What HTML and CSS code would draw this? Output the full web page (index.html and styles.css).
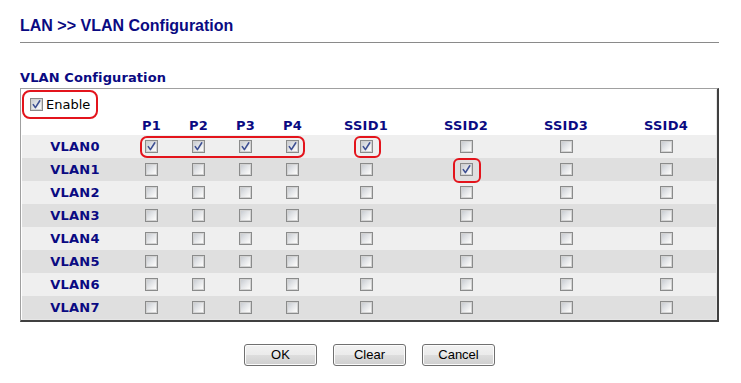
FILE: index.html
```html
<!DOCTYPE html>
<html>
<head>
<meta charset="utf-8">
<title>LAN &gt;&gt; VLAN Configuration</title>
<link rel="stylesheet" href="styles.css">
</head>
<body>
<div class="page">
  <h1 class="page-title">LAN &gt;&gt; VLAN Configuration</h1>
  <div class="section-title">VLAN Configuration</div>
  <div class="panel">
    <div class="panel-inner">
      <div class="enable-row">
        <span class="cb on"><svg viewBox="0 0 11 11"><path d="M2.3 5.6 L4.4 8.6 L8.8 1.8"/></svg></span>
        <span class="enable-label">Enable</span>
      </div>
      <div class="grid head">
        <span></span><span>P1</span><span>P2</span><span>P3</span><span>P4</span><span>SSID1</span><span>SSID2</span><span>SSID3</span><span>SSID4</span>
      </div>
      <div class="grid row light">
        <span class="lbl">VLAN0</span>
        <span class="cb on"><svg viewBox="0 0 11 11"><path d="M2.3 5.6 L4.4 8.6 L8.8 1.8"/></svg></span>
        <span class="cb on"><svg viewBox="0 0 11 11"><path d="M2.3 5.6 L4.4 8.6 L8.8 1.8"/></svg></span>
        <span class="cb on"><svg viewBox="0 0 11 11"><path d="M2.3 5.6 L4.4 8.6 L8.8 1.8"/></svg></span>
        <span class="cb on"><svg viewBox="0 0 11 11"><path d="M2.3 5.6 L4.4 8.6 L8.8 1.8"/></svg></span>
        <span class="cb on"><svg viewBox="0 0 11 11"><path d="M2.3 5.6 L4.4 8.6 L8.8 1.8"/></svg></span>
        <span class="cb"></span><span class="cb"></span><span class="cb"></span>
      </div>
      <div class="grid row dark">
        <span class="lbl">VLAN1</span>
        <span class="cb"></span><span class="cb"></span><span class="cb"></span><span class="cb"></span><span class="cb"></span>
        <span class="cb on"><svg viewBox="0 0 11 11"><path d="M2.3 5.6 L4.4 8.6 L8.8 1.8"/></svg></span>
        <span class="cb"></span><span class="cb"></span>
      </div>
      <div class="grid row light">
        <span class="lbl">VLAN2</span>
        <span class="cb"></span><span class="cb"></span><span class="cb"></span><span class="cb"></span><span class="cb"></span><span class="cb"></span><span class="cb"></span><span class="cb"></span>
      </div>
      <div class="grid row dark">
        <span class="lbl">VLAN3</span>
        <span class="cb"></span><span class="cb"></span><span class="cb"></span><span class="cb"></span><span class="cb"></span><span class="cb"></span><span class="cb"></span><span class="cb"></span>
      </div>
      <div class="grid row light">
        <span class="lbl">VLAN4</span>
        <span class="cb"></span><span class="cb"></span><span class="cb"></span><span class="cb"></span><span class="cb"></span><span class="cb"></span><span class="cb"></span><span class="cb"></span>
      </div>
      <div class="grid row dark">
        <span class="lbl">VLAN5</span>
        <span class="cb"></span><span class="cb"></span><span class="cb"></span><span class="cb"></span><span class="cb"></span><span class="cb"></span><span class="cb"></span><span class="cb"></span>
      </div>
      <div class="grid row light">
        <span class="lbl">VLAN6</span>
        <span class="cb"></span><span class="cb"></span><span class="cb"></span><span class="cb"></span><span class="cb"></span><span class="cb"></span><span class="cb"></span><span class="cb"></span>
      </div>
      <div class="grid row dark">
        <span class="lbl">VLAN7</span>
        <span class="cb"></span><span class="cb"></span><span class="cb"></span><span class="cb"></span><span class="cb"></span><span class="cb"></span><span class="cb"></span><span class="cb"></span>
      </div>
    </div>
    <div class="mark mark-enable"></div>
    <div class="mark mark-ports"></div>
    <div class="mark mark-ssid1"></div>
    <div class="mark mark-ssid2"></div>
  </div>
  <div class="buttons">
    <button class="btn">OK</button>
    <button class="btn">Clear</button>
    <button class="btn">Cancel</button>
  </div>
</div>
</body>
</html>
```
FILE: styles.css
```css
html, body {
  margin: 0;
  padding: 0;
  background: #ffffff;
}

.page {
  width: 699px;
  margin-left: 20px;
  padding-top: 16px;
}

.page-title {
  margin: 0;
  font-family: "Liberation Sans", Arial, sans-serif;
  font-size: 16px;
  font-weight: bold;
  line-height: 20px;
  color: #0a0a82;
  padding-bottom: 6px;
  border-bottom: 1px solid #8a8a8a;
}

.section-title {
  margin-top: 27px;
  font-family: "DejaVu Sans", Verdana, sans-serif;
  font-size: 13px;
  font-weight: bold;
  line-height: 16px;
  letter-spacing: 0.1px;
  color: #0a0a82;
  height: 18px;
}

.panel {
  position: relative;
  border-top: 1px solid #a0a0a0;
  border-left: 1px solid #a0a0a0;
  border-right: 2px solid #404040;
  border-bottom: 2px solid #404040;
}

.panel-inner {
  border-top: 1px solid #ffffff;
  border-left: 1px solid #ffffff;
  border-right: 1px solid #e6e6e6;
  border-bottom: 1px solid #e6e6e6;
}

.enable-row {
  display: flex;
  align-items: center;
  height: 23px;
  box-sizing: border-box;
  padding: 5px 0 0 8px;
  gap: 3px;
}

.enable-label {
  font-family: "DejaVu Sans", Verdana, sans-serif;
  font-size: 13px;
  line-height: 16px;
  color: #000000;
  margin-top: 2px;
}

.grid {
  display: grid;
  grid-template-columns: 106px repeat(4, 47px) repeat(4, 100px);
  justify-items: center;
  font-family: "DejaVu Sans", Verdana, sans-serif;
  font-size: 13px;
  font-weight: bold;
  line-height: 16px;
  letter-spacing: 0.2px;
  color: #0a0a82;
}

.head {
  height: 22px;
  box-sizing: border-box;
  padding-top: 5px;
  align-items: start;
}

.row {
  height: 23px;
  align-items: center;
}

.row.light {
  background: #efefef;
}

.row.dark {
  background: #dfdfdf;
}

.lbl {
  font-weight: bold;
}

.cb {
  display: inline-block;
  width: 13px;
  height: 13px;
  box-sizing: border-box;
  border: 1px solid #8a8b8b;
  background: linear-gradient(135deg, #c3c7cd 0%, #e2e4e7 45%, #f5f5f5 75%, #ffffff 100%);
  box-shadow: inset 0 0 0 1px #d2d2d2;
  flex: none;
}

.cb svg {
  display: block;
  width: 11px;
  height: 11px;
}

.cb svg path {
  fill: none;
  stroke: #3d4f92;
  stroke-width: 1.6;
  stroke-linecap: round;
  stroke-linejoin: round;
}

.mark {
  position: absolute;
  border: 2.5px solid #e3141c;
  border-radius: 7px;
  box-sizing: border-box;
  pointer-events: none;
}

.mark-enable {
  left: 1px;
  top: 1px;
  width: 76px;
  height: 29px;
  border-radius: 8px;
}

.mark-ports {
  left: 119px;
  top: 47px;
  width: 165px;
  height: 22px;
}

.mark-ssid1 {
  left: 333px;
  top: 47px;
  width: 27px;
  height: 22px;
  border-radius: 6px;
}

.mark-ssid2 {
  left: 432px;
  top: 69px;
  width: 28px;
  height: 25px;
  border-radius: 6px;
}

.buttons {
  display: flex;
  justify-content: center;
  gap: 16px;
  margin-top: 22px;
}

.btn {
  width: 73px;
  height: 22px;
  padding: 0;
  margin: 0;
  border: 1px solid #707070;
  border-radius: 3px;
  background: linear-gradient(to bottom, #f2f2f2 0%, #ebebeb 50%, #dddddd 51%, #cfcfcf 100%);
  box-shadow: inset 0 0 0 1px #fcfcfc;
  font-family: "Liberation Sans", Arial, sans-serif;
  font-size: 13px;
  color: #000000;
  line-height: 20px;
}
```
